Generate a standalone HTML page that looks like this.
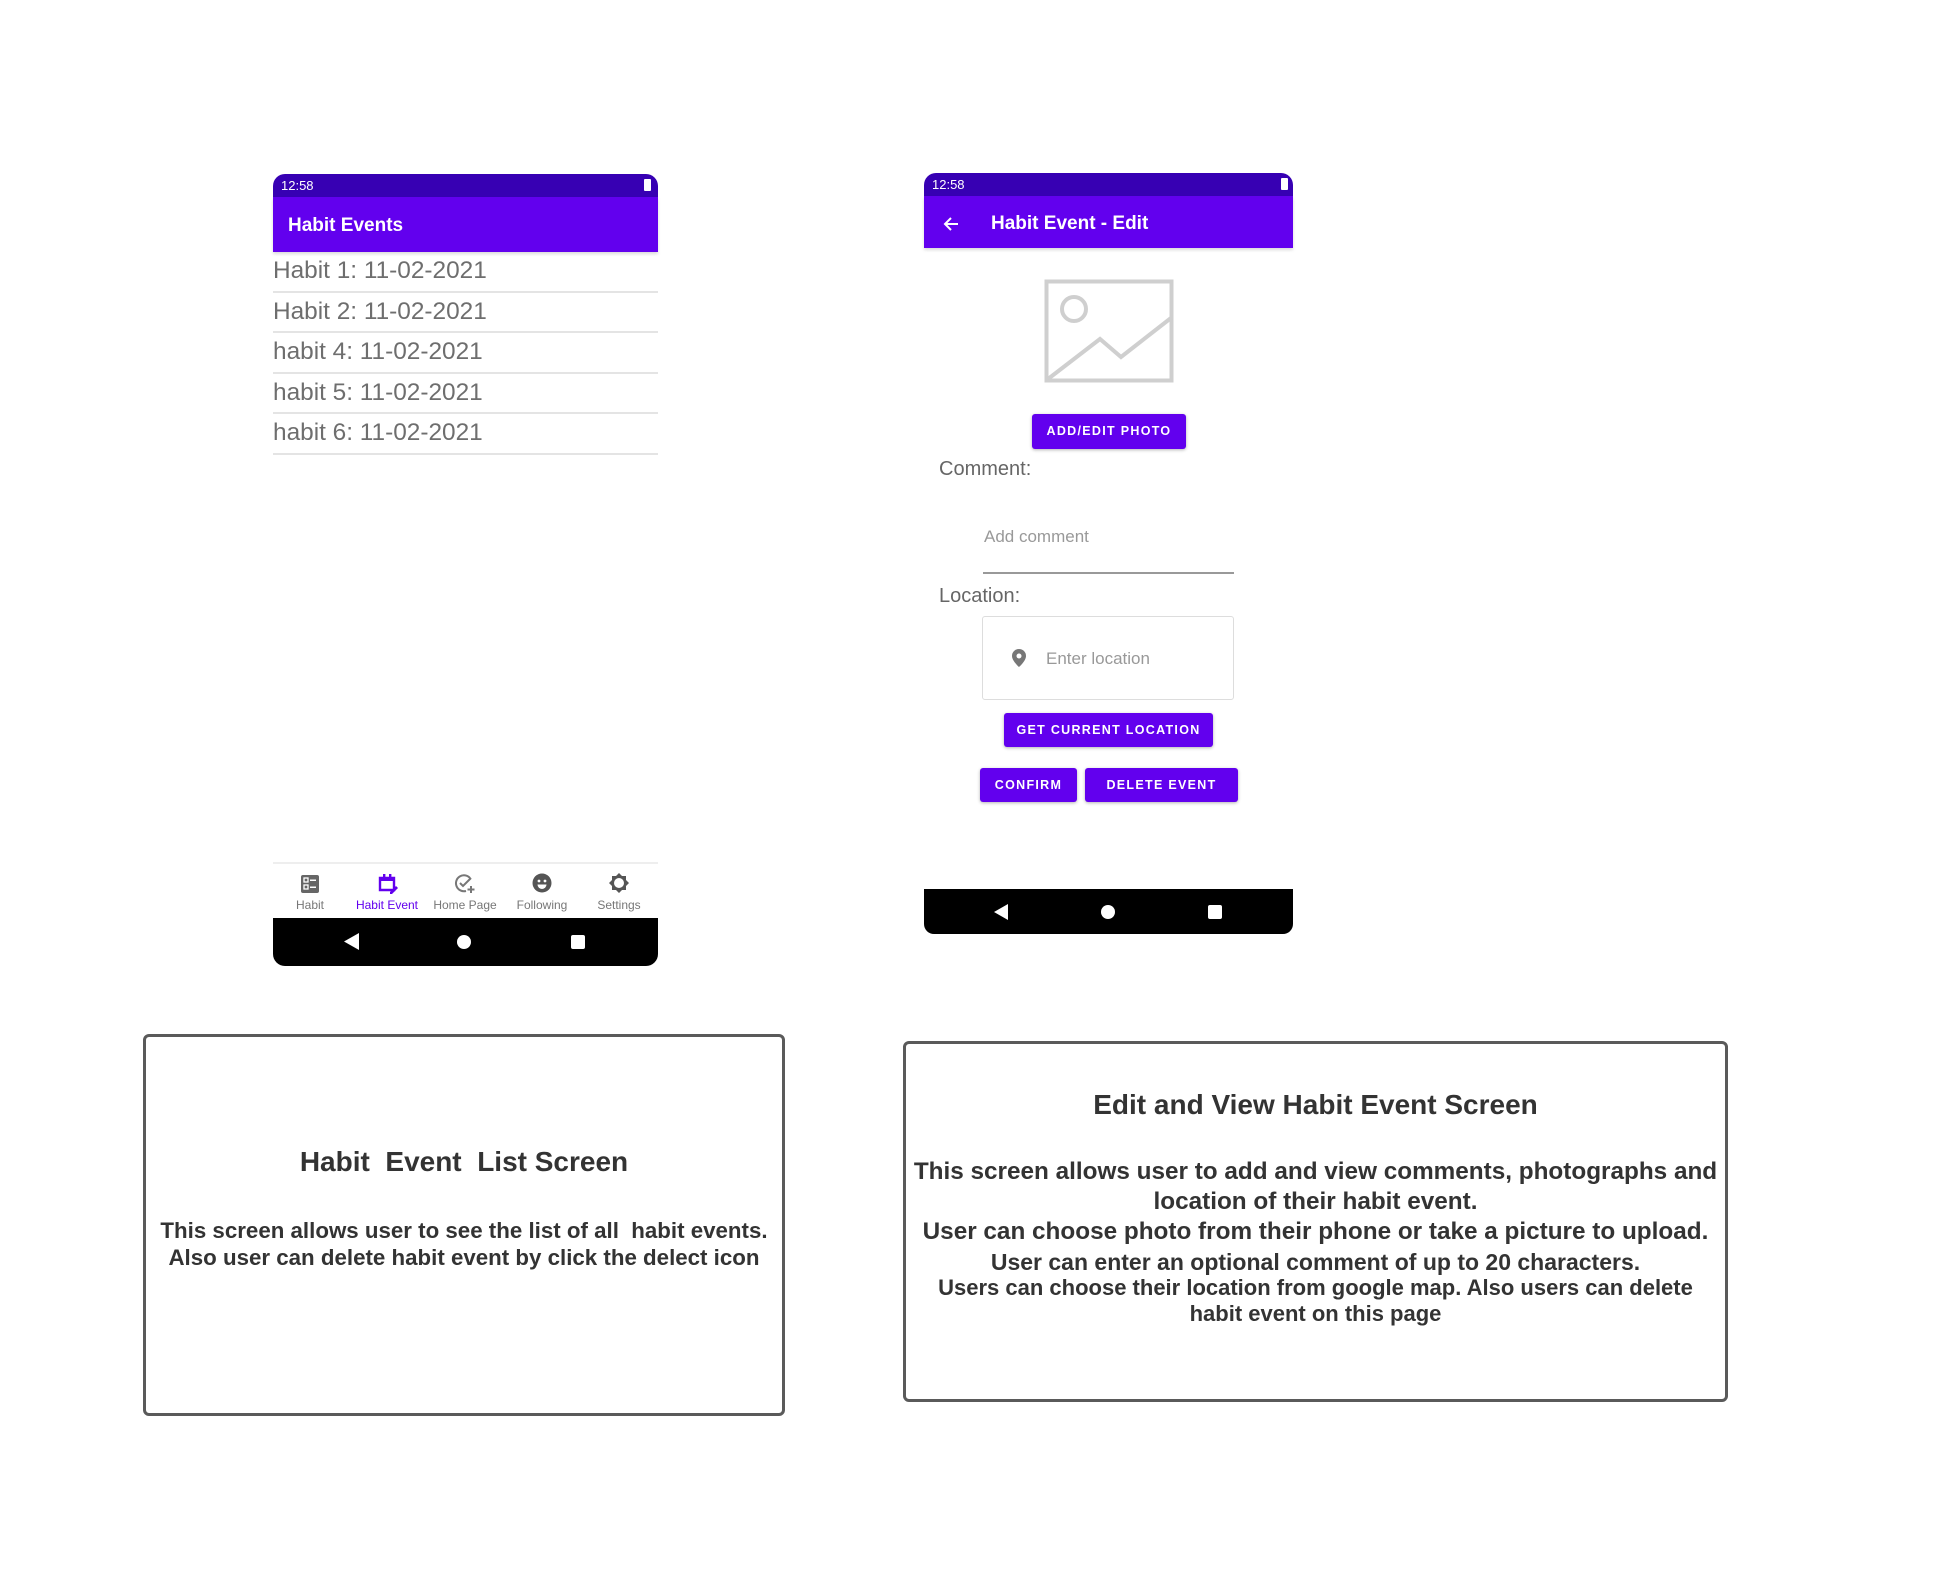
<!DOCTYPE html>
<html><head><meta charset="utf-8"><style>
*{margin:0;padding:0;box-sizing:border-box}
body{width:1957px;height:1574px;background:#fff;position:relative;overflow:hidden;font-family:"Liberation Sans",sans-serif}
.a{position:absolute}
.sb{background:#3700b3;color:#fff;font-size:13px;line-height:23px;padding-left:8px}
.ab{background:#6200ee;color:#fff;font-size:19px;font-weight:bold}
.row{position:absolute;left:273px;width:385px;height:40.5px;border-bottom:2px solid #e4e4e4;color:#6e6e6e;font-size:24.4px;line-height:38px}
.btn{position:absolute;background:#6200ee;color:#fff;font-size:12.5px;font-weight:bold;letter-spacing:1.3px;text-align:center;border-radius:3px;box-shadow:0 1px 3px rgba(0,0,0,.3)}
.nl{position:absolute;top:898px;font-size:12px;color:#777;width:80px;text-align:center}
.box{position:absolute;border:3px solid #5a5a5a;border-radius:6px;color:#333;text-align:center;font-weight:bold}
</style></head><body>

<!-- Left phone -->
<div class="a sb" style="left:273px;top:174px;width:385px;height:23px;border-radius:12px 12px 0 0">12:58</div>
<div class="a" style="left:644px;top:179px;width:7px;height:12px;background:#fff;border-radius:1px"></div>
<div class="a ab" style="left:273px;top:197px;width:385px;height:55px;line-height:58px;padding-left:15px;box-shadow:0 2px 3px rgba(0,0,0,.15)">Habit Events</div>
<div class="row" style="top:252px">Habit 1: 11-02-2021</div>
<div class="row" style="top:292.5px">Habit 2: 11-02-2021</div>
<div class="row" style="top:333px">habit 4: 11-02-2021</div>
<div class="row" style="top:373.5px">habit 5: 11-02-2021</div>
<div class="row" style="top:414px">habit 6: 11-02-2021</div>

<div class="a" style="left:273px;top:862px;width:385px;height:2px;background:#eee"></div>
<svg class="a" style="left:300px;top:874px" width="20" height="20" viewBox="0 0 20 20"><rect x="1" y="1" width="18" height="18" rx="2" fill="#666"/><rect x="4" y="4" width="4" height="4" fill="none" stroke="#fff" stroke-width="1.3"/><rect x="4" y="11" width="4" height="4" fill="none" stroke="#fff" stroke-width="1.3"/><rect x="10" y="5.5" width="6" height="1.5" fill="#fff"/><rect x="10" y="12.5" width="6" height="1.5" fill="#fff"/></svg>
<svg class="a" style="left:377px;top:873px" width="22" height="22" viewBox="0 0 22 22"><path d="M3 5h14v12H3z" fill="none" stroke="#6200ee" stroke-width="2.4"/><rect x="3" y="4" width="14" height="4" fill="#6200ee"/><rect x="6" y="1" width="2.4" height="4" fill="#6200ee"/><rect x="12" y="1" width="2.4" height="4" fill="#6200ee"/><path d="M13 19l6-6 2 2-6 6h-2z" fill="#6200ee"/></svg>
<svg class="a" style="left:454px;top:873px" width="22" height="22" viewBox="0 0 22 22"><path d="M16 5A8 8 0 1 0 12 18" fill="none" stroke="#777" stroke-width="2"/><path d="M6 10l3 3 8-8" fill="none" stroke="#777" stroke-width="2"/><path d="M17 13v7M13.5 16.5h7" stroke="#777" stroke-width="2"/></svg>
<svg class="a" style="left:532px;top:873px" width="20" height="20" viewBox="0 0 20 20"><circle cx="10" cy="10" r="9.5" fill="#555"/><circle cx="7" cy="8" r="1.4" fill="#fff"/><circle cx="13" cy="8" r="1.4" fill="#fff"/><path d="M5.5 11.5h9a4.5 4.5 0 0 1-9 0z" fill="#fff"/></svg>
<svg class="a" style="left:608px;top:872px" width="22" height="22" viewBox="0 0 22 22"><path d="M11 1l3 3h4v4l3 3-3 3v4h-4l-3 3-3-3H4v-4l-3-3 3-3V4h4z" fill="#555"/><circle cx="11" cy="11" r="5" fill="#fff"/></svg>
<div class="nl" style="left:270px">Habit</div>
<div class="nl" style="left:347px;color:#6200ee">Habit Event</div>
<div class="nl" style="left:425px">Home Page</div>
<div class="nl" style="left:502px">Following</div>
<div class="nl" style="left:579px">Settings</div>
<div class="a" style="left:273px;top:918px;width:385px;height:48px;background:#000;border-radius:0 0 12px 12px"></div>
<svg class="a" style="left:344px;top:933px" width="16" height="17"><path d="M0 8.5L15 0v17z" fill="#fff"/></svg>
<div class="a" style="left:457px;top:935px;width:14px;height:14px;border-radius:50%;background:#fff"></div>
<div class="a" style="left:571px;top:935px;width:14px;height:14px;border-radius:2px;background:#fff"></div>

<!-- Right phone -->
<div class="a sb" style="left:924px;top:173px;width:369px;height:23px;border-radius:12px 12px 0 0">12:58</div>
<div class="a" style="left:1281px;top:178px;width:7px;height:12px;background:#fff;border-radius:1px"></div>
<div class="a ab" style="left:924px;top:196px;width:369px;height:52px;line-height:55px;padding-left:67px;box-shadow:0 2px 3px rgba(0,0,0,.15)">Habit Event - Edit</div>
<svg class="a" style="left:942px;top:215px" width="18" height="18" viewBox="0 0 18 18"><path d="M16 9H3M9 3L3 9l6 6" fill="none" stroke="#fff" stroke-width="2"/></svg>
<svg class="a" style="left:1044px;top:279px" width="130" height="104" viewBox="0 0 130 104"><rect x="2.5" y="2.5" width="125" height="99" fill="none" stroke="#cfcfcf" stroke-width="4"/><circle cx="30" cy="30" r="12" fill="none" stroke="#cfcfcf" stroke-width="4"/><path d="M4 100l52-40 21 18 50-39" fill="none" stroke="#cfcfcf" stroke-width="4"/></svg>
<div class="btn" style="left:1032px;top:414px;width:154px;height:35px;line-height:35px">ADD/EDIT PHOTO</div>
<div class="a" style="left:939px;top:458px;font-size:20px;color:#666">Comment:</div>
<div class="a" style="left:984px;top:527px;font-size:17px;color:#999">Add comment</div>
<div class="a" style="left:983px;top:572px;width:251px;height:2px;background:#999"></div>
<div class="a" style="left:939px;top:585px;font-size:20px;color:#666">Location:</div>
<div class="a" style="left:982px;top:616px;width:252px;height:84px;border:1.5px solid #ddd;border-radius:3px"></div>
<svg class="a" style="left:1012px;top:649px" width="14" height="18" viewBox="0 0 14 18"><path d="M7 0a7 7 0 0 0-7 7c0 5 7 11 7 11s7-6 7-11a7 7 0 0 0-7-7z" fill="#777"/><circle cx="7" cy="7" r="2.5" fill="#fff"/></svg>
<div class="a" style="left:1046px;top:649px;font-size:17px;color:#999">Enter location</div>
<div class="btn" style="left:1004px;top:713px;width:209px;height:34px;line-height:34px">GET CURRENT LOCATION</div>
<div class="btn" style="left:980px;top:768px;width:97px;height:34px;line-height:34px">CONFIRM</div>
<div class="btn" style="left:1085px;top:768px;width:153px;height:34px;line-height:34px">DELETE EVENT</div>
<div class="a" style="left:924px;top:889px;width:369px;height:45px;background:#000;border-radius:0 0 10px 10px"></div>
<svg class="a" style="left:994px;top:904px" width="15" height="16"><path d="M0 8L14 0v16z" fill="#fff"/></svg>
<div class="a" style="left:1101px;top:905px;width:14px;height:14px;border-radius:50%;background:#fff"></div>
<div class="a" style="left:1208px;top:905px;width:14px;height:14px;border-radius:2px;background:#fff"></div>

<!-- Left description box -->
<div class="box" style="left:143px;top:1034px;width:642px;height:382px">
<div style="position:absolute;top:109px;width:100%;font-size:28px">Habit&nbsp; Event&nbsp; List Screen</div>
<div style="position:absolute;top:180px;width:100%;font-size:22.3px;line-height:27px">This screen allows user to see the list of all&nbsp; habit events.<br>Also user can delete habit event by click the delect icon</div>
</div>

<!-- Right description box -->
<div class="box" style="left:903px;top:1041px;width:825px;height:361px">
<div style="position:absolute;top:45px;width:100%;font-size:28px">Edit and View Habit Event Screen</div>
<div style="position:absolute;top:113px;width:100%;font-size:24.3px;line-height:30px">This screen allows user to add and view comments, photographs and<br>location of their habit event.<br>User can choose photo from their phone or take a picture to upload.</div>
<div style="position:absolute;top:205px;width:100%;font-size:23px;line-height:26px">User can enter an optional comment of up to 20 characters.</div>
<div style="position:absolute;top:231px;width:100%;font-size:22px;line-height:26px">Users can choose their location from google map. Also users can delete<br>habit event on this page</div>
</div>
</body></html>
